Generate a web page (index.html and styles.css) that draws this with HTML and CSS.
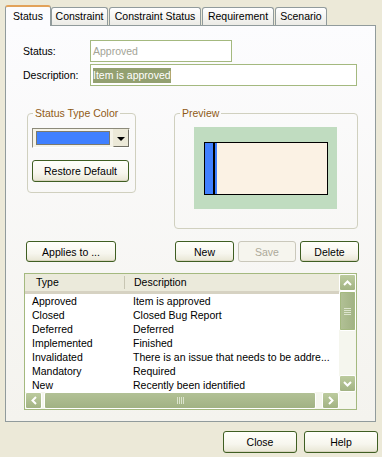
FILE: index.html
```html
<!DOCTYPE html>
<html lang="en">
<head>
    <meta charset="UTF-8">
    <title>Status Types</title>
    <link rel="stylesheet" href="styles.css">
</head>
<body>

    <div class="dialogo">
        <div class="abas">
            <div class="aba ativa" style="width: 46px">Status</div>
            <div class="aba" style="width: 57px">Constraint</div>
            <div class="aba" style="width: 92px">Constraint Status</div>
            <div class="aba" style="width: 72px">Requirement</div>
            <div class="aba" style="width: 52px">Scenario</div>
        </div>

        <div class="painel">
            <div class="linha">
                <label>Status:</label>
                <div class="campo campo-curto desativado">Approved</div>
            </div>
            <div class="linha">
                <label>Description:</label>
                <div class="campo campo-longo"><span class="selecao">Item is approved</span></div>
            </div>

            <div class="grupos">
                <fieldset class="grupo grupo-cor">
                    <legend>Status Type Color</legend>
                    <div class="combo">
                        <div class="amostra"><span></span></div>
                        <div class="seta"><span></span></div>
                    </div>
                    <button class="botao botao-restaurar">Restore Default</button>
                </fieldset>

                <fieldset class="grupo grupo-preview">
                    <legend>Preview</legend>
                    <div class="fundo-preview">
                        <div class="elemento">
                            <div class="barra"></div>
                            <div class="corpo"></div>
                        </div>
                    </div>
                </fieldset>
            </div>

            <div class="acoes">
                <button class="botao" style="width: 90px">Applies to ...</button>
                <div class="acoes-direita">
                    <button class="botao" style="width: 59px">New</button>
                    <button class="botao desligado" style="width: 58px">Save</button>
                    <button class="botao" style="width: 59px">Delete</button>
                </div>
            </div>

            <div class="lista">
                <div class="lista-conteudo">
                    <div class="cabecalho">
                        <div class="col-tipo">Type</div>
                        <div class="col-desc">Description</div>
                    </div>
                    <div class="item"><div class="col-tipo">Approved</div><div class="col-desc">Item is approved</div></div>
                    <div class="item"><div class="col-tipo">Closed</div><div class="col-desc">Closed Bug Report</div></div>
                    <div class="item"><div class="col-tipo">Deferred</div><div class="col-desc">Deferred</div></div>
                    <div class="item"><div class="col-tipo">Implemented</div><div class="col-desc">Finished</div></div>
                    <div class="item"><div class="col-tipo">Invalidated</div><div class="col-desc">There is an issue that needs to be addre...</div></div>
                    <div class="item"><div class="col-tipo">Mandatory</div><div class="col-desc">Required</div></div>
                    <div class="item"><div class="col-tipo">New</div><div class="col-desc">Recently been identified</div></div>
                </div>

                <div class="rolagem-v">
                    <div class="rb">
                        <svg width="9" height="6" viewBox="0 0 9 6"><path d="M1 5 L4.5 1.5 L8 5" fill="none" stroke="#fff" stroke-width="2"/></svg>
                    </div>
                    <div class="polegar-v"><span class="grip-h"></span></div>
                    <div class="trilho"></div>
                    <div class="rb">
                        <svg width="9" height="6" viewBox="0 0 9 6"><path d="M1 1 L4.5 4.5 L8 1" fill="none" stroke="#fff" stroke-width="2"/></svg>
                    </div>
                </div>

                <div class="rolagem-h">
                    <div class="rb">
                        <svg width="6" height="9" viewBox="0 0 6 9"><path d="M5 1 L1.5 4.5 L5 8" fill="none" stroke="#fff" stroke-width="2"/></svg>
                    </div>
                    <div class="polegar-h"><span class="grip-v"></span></div>
                    <div class="rb">
                        <svg width="6" height="9" viewBox="0 0 6 9"><path d="M1 1 L4.5 4.5 L1 8" fill="none" stroke="#fff" stroke-width="2"/></svg>
                    </div>
                </div>

                <div class="canto"></div>
            </div>
        </div>

        <div class="rodape">
            <button class="botao" style="width: 74px">Close</button>
            <button class="botao" style="width: 74px">Help</button>
        </div>
    </div>

</body>
</html>
```

FILE: styles.css
```css
body {
    font-family: "Liberation Sans", Arial, sans-serif;
    font-size: 10.5px;
    color: #000000;
    background-color: #ECE9D8;
    margin: 0;
    padding: 0;
}

.dialogo {
    width: 382px;
    height: 457px;
    padding: 5px 0 0 5px;
    box-sizing: border-box;
}

/* abas */

.abas {
    display: flex;
    align-items: flex-end;
    height: 20px;
}

.aba {
    height: 18px;
    box-sizing: border-box;
    border: 1px solid #919B9C;
    border-bottom: none;
    border-radius: 3px 3px 0 0;
    background: linear-gradient(#FFFFFF, #ECEBE6);
    text-align: center;
    line-height: 16px;
    margin-right: 1px;
}

.aba.ativa {
    height: 21px;
    margin-bottom: -1px;
    margin-right: 0;
    position: relative;
    z-index: 1;
    background: #FCFCFE;
    border-top: 2px solid #E2A25A;
    line-height: 18px;
}

/* painel */

.painel {
    width: 371px;
    height: 397px;
    box-sizing: border-box;
    border: 1px solid #919B9C;
    background: linear-gradient(#FCFCFE, #F4F3EE);
    padding: 14px 0 0 17px;
}

.linha {
    display: flex;
    align-items: center;
    height: 22px;
    margin-bottom: 2px;
}

.linha label {
    width: 67px;
}

.campo {
    height: 22px;
    box-sizing: border-box;
    border: 1px solid #A4B97F;
    background: #FFFFFF;
    padding: 0 2px;
    line-height: 20px;
}

.campo-curto {
    width: 142px;
}

.campo-longo {
    width: 267px;
}

.desativado {
    color: #A4A497;
}

.selecao {
    background: #93A070;
    color: #FFFFFF;
    padding: 1px 0 2px;
}

/* grupos */

.grupos {
    display: flex;
    margin: 21px 0 0 4px;
}

.grupo {
    margin: 0;
    border: 1px solid #D0D0BF;
    border-radius: 4px;
    box-sizing: border-box;
    padding: 0 0 0 4px;
}

.grupo legend {
    color: #905B16;
    padding: 0 2px;
    margin-left: 1px;
    line-height: 13px;
}

.grupo-cor {
    width: 109px;
    height: 86px;
    padding-top: 8px;
}

.grupo-preview {
    width: 184px;
    height: 122px;
    margin-left: 38px;
    padding-top: 7px;
}

.combo {
    display: flex;
    width: 98px;
    height: 20px;
    box-sizing: border-box;
    border: 1px solid #8C8A7A;
    border-right-color: #FFFFFF;
    border-bottom-color: #FFFFFF;
    background: #F5F3E8;
    margin-bottom: 12px;
}

.amostra {
    flex: 1;
    padding: 2px 3px 2px 3px;
}

.amostra span {
    display: block;
    height: 100%;
    box-sizing: border-box;
    background: #4080FF;
    border: 1px solid #7C7A6C;
}

.seta {
    width: 16px;
    box-sizing: border-box;
    border: 1px solid #ECE9D8;
    border-right-color: #716F64;
    border-bottom-color: #716F64;
    background: #ECE9D8;
    display: flex;
    align-items: center;
    justify-content: center;
}

.seta span {
    width: 0;
    height: 0;
    border-left: 4px solid transparent;
    border-right: 4px solid transparent;
    border-top: 4px solid #000000;
    margin-top: 1px;
}

.fundo-preview {
    width: 143px;
    height: 82px;
    background: #C0DCC0;
    padding: 15px 0 0 10px;
    margin-left: 15px;
    box-sizing: border-box;
}

.elemento {
    display: flex;
    width: 124px;
    height: 53px;
    box-sizing: border-box;
    border: 1px solid #000000;
}

.barra {
    width: 8px;
    background: #4080FF;
    border-right: 2px solid #000000;
    box-shadow: 3px 0 0 #4080FF, 4px 0 0 #000000;
}

.corpo {
    flex: 1;
    margin-left: 2px;
    background: #FBF2E4;
}

/* botoes */

.botao {
    font-family: "Liberation Sans", Arial, sans-serif;
    font-size: 10.5px;
    color: #000000;
    height: 22px;
    padding: 0;
    border: 1px solid #3F5E22;
    border-radius: 3px;
    background: linear-gradient(#FFFFFB 0%, #F7F6EE 60%, #E8E6D4 100%);
    box-shadow: inset 0 -1px 0 #D8D4BE;
}

.botao.desligado {
    color: #ADA999;
    border-color: #CAC8BB;
    background: #F6F5EE;
    box-shadow: none;
}

.botao-restaurar {
    width: 97px;
}

.acoes {
    display: flex;
    justify-content: space-between;
    width: 333px;
    margin: 12px 0 0 3px;
}

.acoes-direita {
    display: flex;
    gap: 4px;
}

.acoes .botao {
    height: 21px;
}

/* lista */

.lista {
    display: grid;
    grid-template-columns: 1fr 17px;
    grid-template-rows: 1fr 17px;
    width: 333px;
    height: 137px;
    box-sizing: border-box;
    border: 1px solid #A4B97F;
    margin: 11px 0 0 1px;
    background: #FFFFFF;
}

.lista-conteudo {
    overflow: hidden;
}

.cabecalho {
    display: flex;
    height: 20px;
    box-sizing: border-box;
    background: #EBEADB;
    border-bottom: 3px solid #D6D2C2;
    line-height: 17px;
}

.cabecalho .col-tipo {
    padding-left: 11px;
    border-right: 1px solid #C7C5B2;
    height: 13px;
    line-height: 13px;
    margin-top: 2px;
}

.cabecalho .col-desc {
    padding-left: 9px;
}

.col-tipo {
    width: 100px;
    padding-left: 7px;
    box-sizing: border-box;
    white-space: nowrap;
}

.col-desc {
    flex: 1;
    padding-left: 8px;
    white-space: nowrap;
}

.item {
    display: flex;
    height: 14px;
    line-height: 14px;
}

.rolagem-v {
    display: flex;
    flex-direction: column;
    background: #F5F6EE;
}

.rolagem-h {
    display: flex;
    background: #F5F6EE;
}

.rb {
    width: 17px;
    height: 17px;
    box-sizing: border-box;
    border: 1px solid #FFFFFF;
    border-radius: 2px;
    background: linear-gradient(#BCCB9E, #A2B383);
    display: flex;
    align-items: center;
    justify-content: center;
}

.polegar-v {
    height: 40px;
    box-sizing: border-box;
    border: 1px solid #FFFFFF;
    outline: 1px solid #A4B97F;
    outline-offset: -2px;
    border-radius: 2px;
    background: linear-gradient(90deg, #B2C196, #A1B283);
    display: flex;
    align-items: center;
    justify-content: center;
}

.trilho {
    flex: 1;
}

.polegar-h {
    flex: 1;
    margin: 0 2px 0 2px;
    box-sizing: border-box;
    border: 1px solid #FFFFFF;
    border-radius: 2px;
    background: linear-gradient(#B2C196, #A1B283);
    display: flex;
    align-items: center;
    justify-content: center;
}

.polegar-h + .rb {
    margin-left: 4px;
}

.grip-h {
    width: 7px;
    height: 7px;
    background: repeating-linear-gradient(#DCE4CD 0 1px, transparent 1px 2px);
}

.grip-v {
    width: 7px;
    height: 7px;
    background: repeating-linear-gradient(90deg, #DCE4CD 0 1px, transparent 1px 2px);
}

.canto {
    background: #F5F6EE;
}

/* rodape */

.rodape {
    display: flex;
    justify-content: flex-end;
    gap: 7px;
    width: 373px;
    margin-top: 9px;
}
```
